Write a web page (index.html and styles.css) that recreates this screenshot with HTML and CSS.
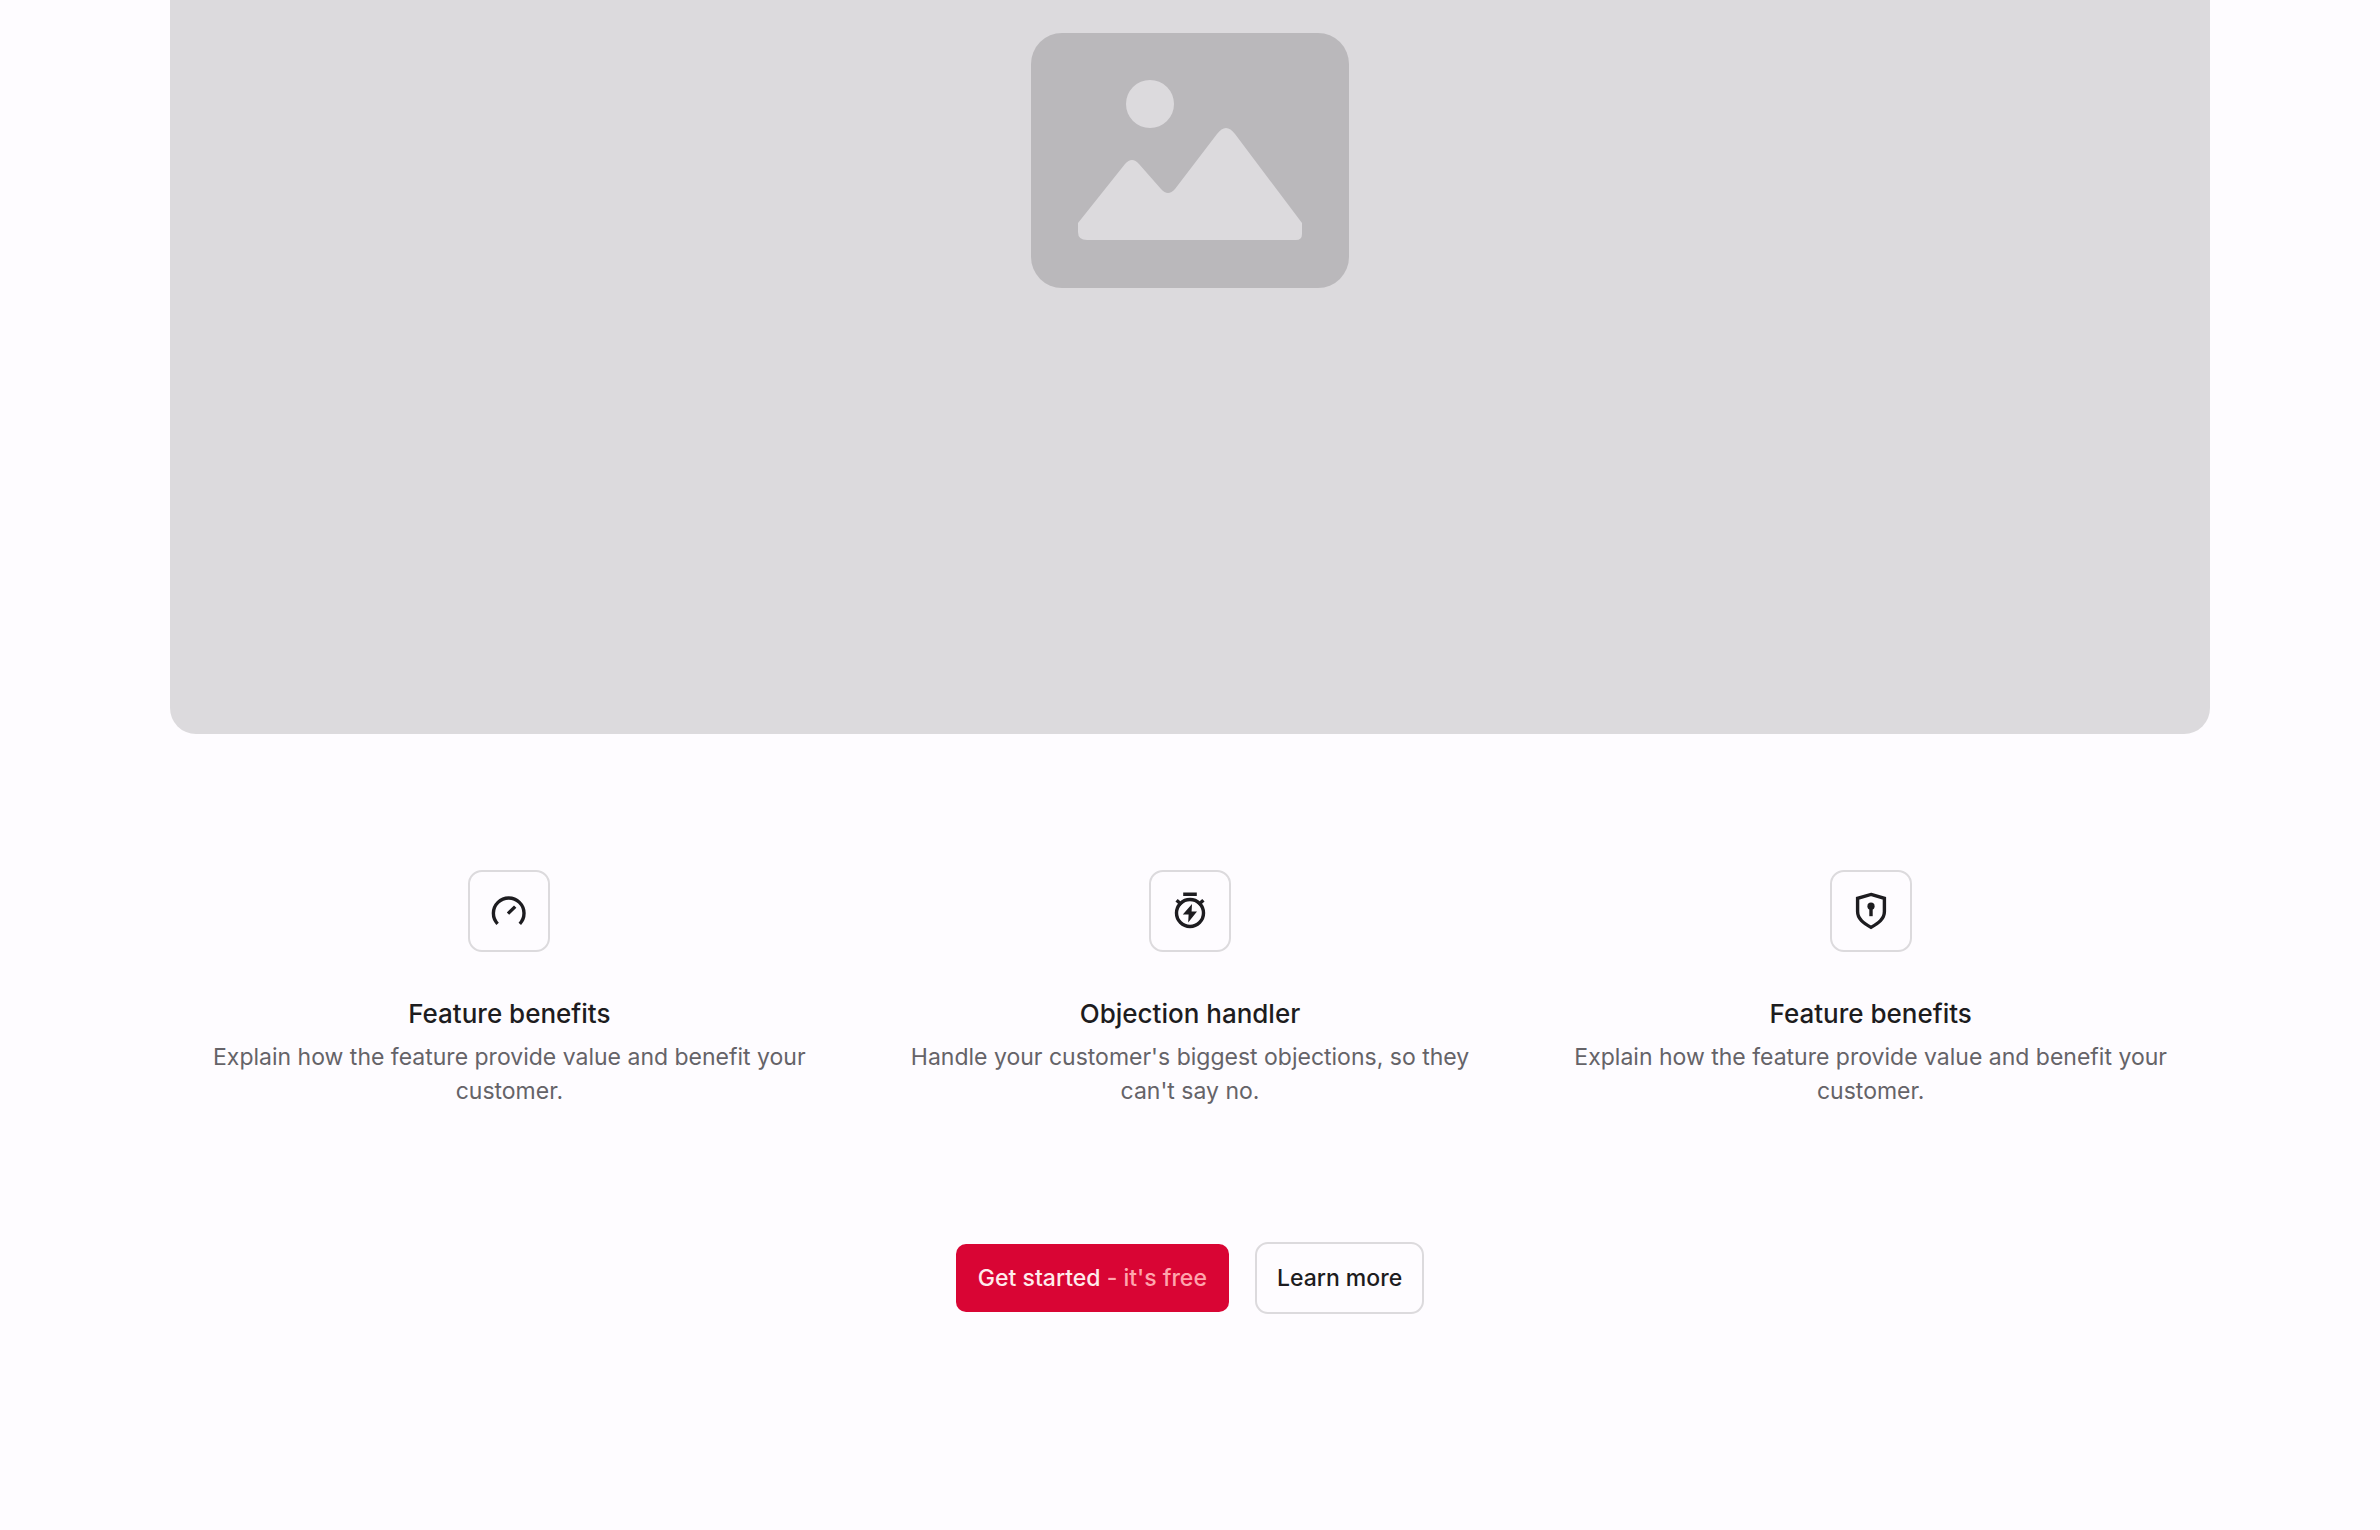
FILE: index.html
```html
<!DOCTYPE html>
<html lang="en">
<head>
    <meta charset="UTF-8">
    <meta name="viewport" content="width=device-width, initial-scale=1">
    <title>Feature benefits</title>
    <link rel="stylesheet" href="styles.css">
</head>
<body>
    <main class="container">
        <div class="hero-image">
            <svg class="placeholder" viewBox="0 0 318 255" role="img" aria-label="Image placeholder">
                <rect class="placeholder-frame" width="318" height="255" rx="31"/>
                <circle class="placeholder-shape" cx="119" cy="71" r="24"/>
                <path class="placeholder-shape" d="M47 190L94 131Q101 123 108 131L130 156Q137 164 144 156L186 101Q195 89 204 101L271 190V201Q271 207 265 207H56Q47 207 47 199Z"/>
            </svg>
        </div>

        <section class="features">
            <div class="feature">
                <div class="feature-icon">
                    <svg viewBox="0 0 40 40" aria-hidden="true">
                        <path d="M8.6 32.8A15.3 15.3 0 1 1 30.8 32.8M19 22.6L26.2 15.6"/>
                    </svg>
                </div>
                <h3>Feature benefits</h3>
                <p>Explain how the feature provide value and benefit your customer.</p>
            </div>
            <div class="feature">
                <div class="feature-icon">
                    <svg viewBox="0 0 40 40" aria-hidden="true">
                        <circle cx="20" cy="22" r="13.5"/>
                        <path d="M13.2 3.2H26.8M6.6 9.2L11.4 13.6M33.4 9.2L28.6 13.6"/>
                        <path class="solid" d="M22 13L12.8 23.6H18.6L18.2 31.4L27 20.4H21.6Z"/>
                    </svg>
                </div>
                <h3>Objection handler</h3>
                <p>Handle your customer's biggest objections, so they can't say no.</p>
            </div>
            <div class="feature">
                <div class="feature-icon">
                    <svg viewBox="0 0 40 40" aria-hidden="true">
                        <path d="M20 3.4L33.4 7.3V20.5C33.4 28 27.5 32 20 36.4C12.5 32 6.6 28 6.6 20.5V7.3Z"/>
                        <circle class="solid" cx="20" cy="15.2" r="3.6"/>
                        <path d="M20 15V25.2"/>
                    </svg>
                </div>
                <h3>Feature benefits</h3>
                <p>Explain how the feature provide value and benefit your customer.</p>
            </div>
        </section>

        <div class="actions">
            <button class="btn btn-primary" type="button">Get started <span>- it's free</span></button>
            <button class="btn btn-outline" type="button">Learn more</button>
        </div>
    </main>
</body>
</html>
```
FILE: styles.css
```css
* {
    box-sizing: border-box;
}

body {
    margin: 0;
    padding: 0 170px;
    font-family: Inter, "Liberation Sans", sans-serif;
    background-color: #fefcff;
    color: #1d1c20;
}

.hero-image {
    display: flex;
    justify-content: center;
    padding: 33px 0 446px;
    background-color: #dcdadd;
    border-radius: 0 0 26px 26px;
}

.placeholder {
    display: block;
    width: 318px;
}
.placeholder-frame {
    fill: #bab8bb;
}
.placeholder-shape {
    fill: #dcdadd;
}

.features {
    display: grid;
    grid-template-columns: repeat(3, 1fr);
    gap: 2px;
    padding-top: 136px;
    text-align: center;
}
.feature {
    padding: 0 40px;
}
.feature-icon {
    display: flex;
    align-items: center;
    justify-content: center;
    width: 82px;
    height: 82px;
    margin: 0 auto 42px;
    border: 2px solid #dcdadd;
    border-radius: 14px;
}
.feature-icon svg {
    width: 40px;
    height: 40px;
    fill: none;
    stroke: #1d1c20;
    stroke-width: 3.4;
}
.feature-icon .solid {
    fill: #1d1c20;
    stroke: none;
}
.feature h3 {
    margin: 0 0 6px;
    font-size: 26px;
    font-weight: 500;
    line-height: 40px;
}
.feature p {
    margin: 0;
    font-size: 23px;
    line-height: 34px;
    color: #656368;
}

.actions {
    display: flex;
    align-items: center;
    justify-content: center;
    gap: 26px;
    padding: 134px 0 80px;
}
.btn {
    padding: 19px 22px;
    border: none;
    border-radius: 10px;
    font-family: inherit;
    font-size: 23px;
    font-weight: 500;
    line-height: 30px;
    cursor: pointer;
}
.btn-primary {
    background-color: #d90534;
    color: #ffecec;
}
.btn-primary span {
    color: #ffa5ad;
}
.btn-outline {
    padding: 19px 20px;
    border: 2px solid #dcdadd;
    border-radius: 13px;
    background-color: transparent;
    color: #1d1c20;
}
```
